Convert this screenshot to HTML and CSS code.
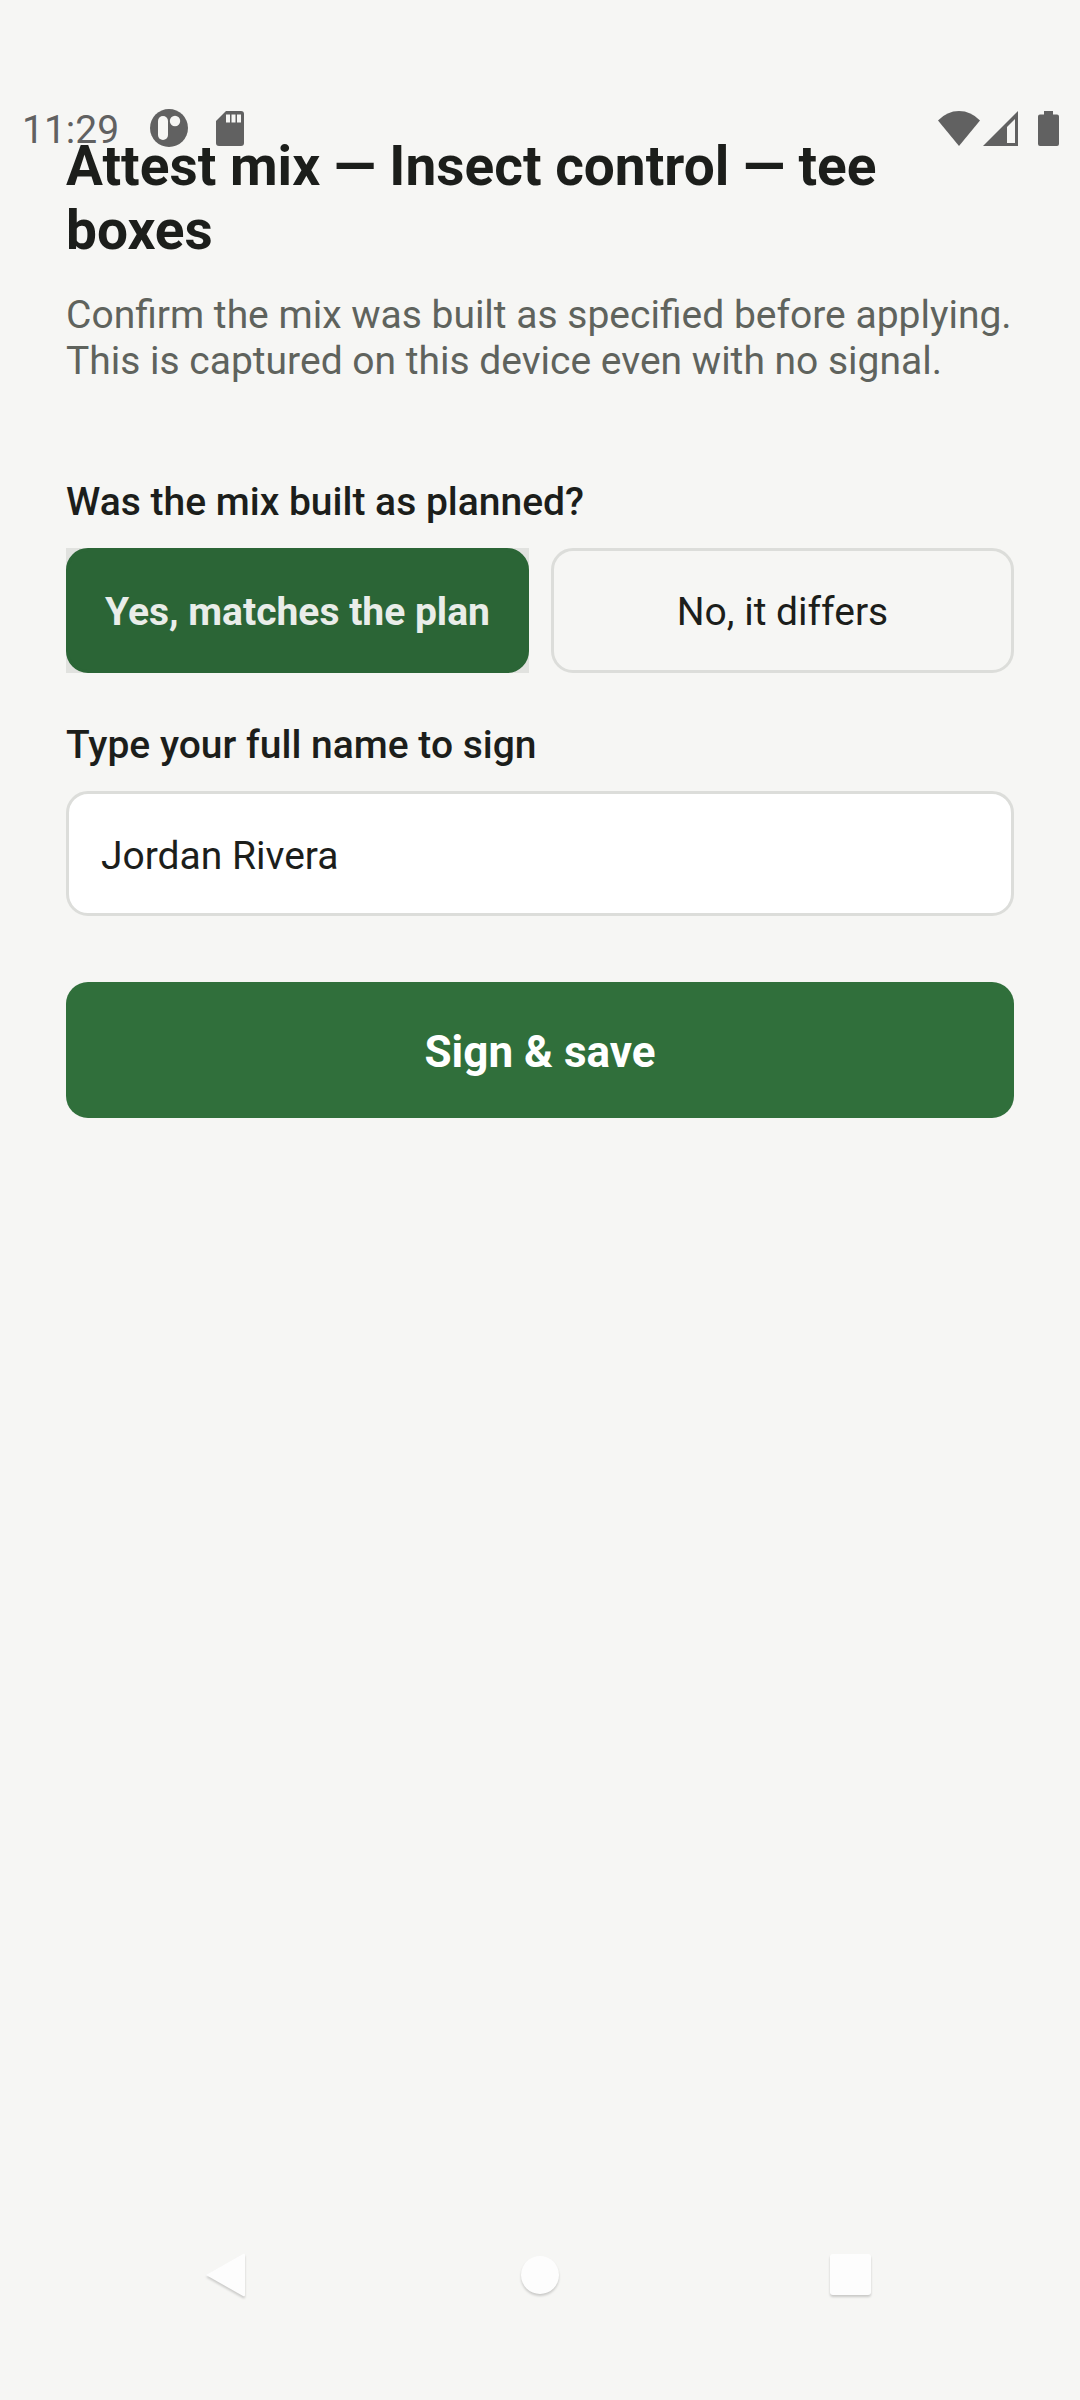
FILE: index.html
```html
<!DOCTYPE html>
<html lang="en">

<head>
    <meta charset="UTF-8">
    <meta name="viewport" content="width=device-width, initial-scale=1.0">
    <title>Attest mix</title>
    <link rel="stylesheet" href="styles.css">
</head>

<body>
    <div class="status-bar">
        <span class="status-time">11:29</span>
        <svg class="status-app" width="38" height="38" viewBox="0 0 38 38">
            <circle cx="19" cy="19" r="19" fill="#616161" />
            <rect x="8" y="7" width="10" height="24" rx="5" fill="#f6f6f4" />
            <circle cx="25" cy="12" r="5.2" fill="#f6f6f4" />
        </svg>
        <svg class="status-card" width="28" height="35" viewBox="0 0 28 35">
            <path d="M10 0H25Q28 0 28 3V32Q28 35 25 35H3Q0 35 0 32V10Z" fill="#616161" />
            <path d="M10 3.500h4v8h-4zM15.500 3.500h4v8h-4zM21 3.500h4v8h-4z" fill="#f6f6f4" />
        </svg>
        <div class="status-right">
            <svg width="42" height="35" viewBox="0 0 42 35">
                <path d="M21 35L0 9.500Q9 0 21 0T42 9.500Z" fill="#616161" />
            </svg>
            <svg width="35" height="35" viewBox="0 0 35 35">
                <path d="M35 0V35H0ZM32 8L24 16V32H32Z" fill="#616161" fill-rule="evenodd" />
            </svg>
            <svg class="status-battery" width="21" height="35" viewBox="0 0 21 35">
                <path d="M6 0H15V3.500H19Q21 3.500 21 5.500V33Q21 35 19 35H2Q0 35 0 33V5.500Q0 3.500 2 3.500H6Z" fill="#616161" />
            </svg>
        </div>
    </div>

    <main class="content">
        <h1>Attest mix — Insect control — tee boxes</h1>
        <p class="intro">Confirm the mix was built as specified before applying. This is captured on this device even with no signal.</p>

        <form class="form">
            <div class="field" role="group" aria-labelledby="built-label">
                <div class="label" id="built-label">Was the mix built as planned?</div>
                <div class="choices">
                    <div class="choice-wrap">
                        <button type="button" class="choice selected" aria-pressed="true">Yes, matches the plan</button>
                    </div>
                    <button type="button" class="choice" aria-pressed="false">No, it differs</button>
                </div>
            </div>

            <div class="field">
                <label class="label" for="full-name">Type your full name to sign</label>
                <input type="text" id="full-name" value="Jordan Rivera" autocomplete="off">
            </div>

            <button type="button" class="save">Sign &amp; save</button>
        </form>
    </main>

    <nav class="nav-bar">
        <button type="button" aria-label="Back">
            <svg width="48" height="48" viewBox="0 0 48 48">
                <path d="M1 24L38 3Q40 2 40 4V44Q40 46 38 45Z" fill="#fdfdfd" />
            </svg>
        </button>
        <button type="button" aria-label="Home">
            <svg width="48" height="48" viewBox="0 0 48 48">
                <circle cx="24" cy="24" r="19" fill="#fdfdfd" />
            </svg>
        </button>
        <button type="button" aria-label="Recent apps">
            <svg width="48" height="48" viewBox="0 0 48 48">
                <rect x="3" y="3" width="41" height="41" rx="3" fill="#fdfdfd" />
            </svg>
        </button>
    </nav>
</body>

</html>
```
FILE: styles.css
```css
* {
    box-sizing: border-box;
}

body {
    margin: 0;
    min-height: 100vh;
    display: flex;
    flex-direction: column;
    background-color: #f6f6f4;
    color: #1c1e1b;
    font-family: Roboto, "Liberation Sans", sans-serif;
    font-size: 39px;
    line-height: 46px;
}

/* System bar floats over the top of the page */
.status-bar {
    position: absolute;
    top: 105px;
    left: 0;
    right: 0;
    display: flex;
    align-items: center;
    height: 46px;
    padding: 0 21px 0 22px;
    color: #616161;
}

.status-time {
    padding-top: 3px;
}

.status-app {
    margin-left: 31px;
}

.status-card {
    margin-left: 28px;
}

.status-right {
    display: flex;
    align-items: center;
    gap: 3px;
    margin-left: auto;
}

.status-battery {
    margin-left: 17px;
}

.content {
    flex: 1;
    padding: 134px 66px 66px;
}

h1 {
    margin: 0 0 30px;
    font-size: 55px;
    line-height: 64px;
    font-weight: 700;
}

.intro {
    margin: 0 0 95px;
    color: #5f635d;
}

.field {
    margin-bottom: 49px;
}

.label {
    display: block;
    margin-bottom: 23px;
    font-weight: 500;
}

.choices {
    display: grid;
    grid-template-columns: 1fr 1fr;
    gap: 22px;
}

/* Pressed highlight shows behind the rounded corners */
.choice-wrap {
    display: grid;
    background-color: #e1e2df;
}

button,
input {
    font: inherit;
    color: inherit;
    border-radius: 22px;
}

.choice {
    height: 125px;
    padding: 3px 0 0;
    border: 3px solid #dcddda;
    background: none;
}

.choice.selected {
    border-color: #2b6536;
    background-color: #2b6536;
    color: #e9ede9;
    font-weight: 700;
}

input {
    display: block;
    width: 100%;
    height: 125px;
    padding: 4px 32px 0;
    border: 3px solid #dcddda;
    background-color: #fff;
}

.save {
    display: block;
    width: 100%;
    height: 136px;
    margin-top: 66px;
    padding: 3px 0 0;
    border: none;
    background-color: #306f3b;
    color: #fff;
    font-size: 44px;
    font-weight: 700;
}

.nav-bar {
    display: flex;
    justify-content: center;
    gap: 263px;
    padding-bottom: 101px;
}

.nav-bar button {
    display: flex;
    padding: 0;
    border: none;
    background: none;
}

.nav-bar svg {
    filter: drop-shadow(0 2px 1px rgba(0, 0, 0, 0.18));
}
```
